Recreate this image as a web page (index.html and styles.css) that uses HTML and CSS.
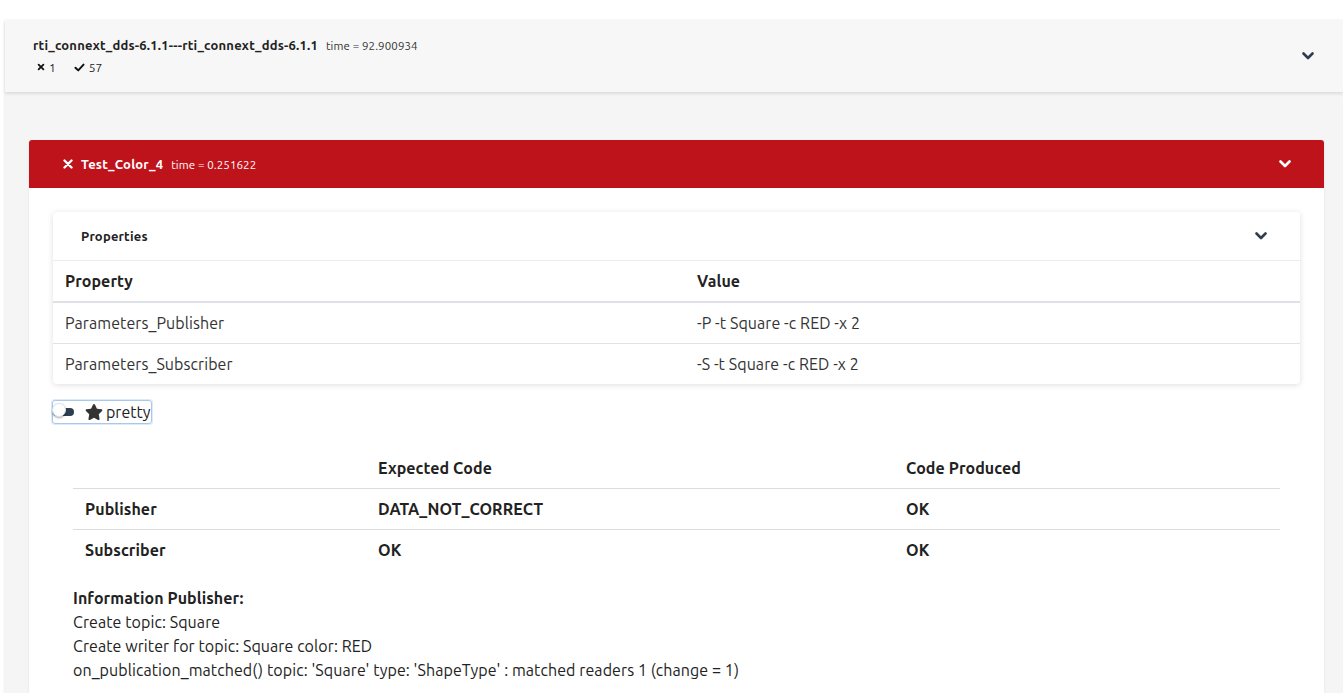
FILE: index.html
```html
<!DOCTYPE html>
<html>
<head>
<meta charset="utf-8">
<link rel="stylesheet" href="styles.css">
</head>
<body>
<div class="suite">
  <div class="suite-head">
    <div class="suite-info">
      <div class="title-line"><span class="title">rti_connext_dds-6.1.1---rti_connext_dds-6.1.1</span><span class="time">time = 92.900934</span></div>
      <div class="counts">
        <span class="count"><svg class="ic-x" viewBox="0 0 10 10"><path d="M2 2L8 8M8 2L2 8" stroke="#111" stroke-width="2.2" stroke-linecap="round"/></svg>1</span>
        <span class="count"><svg class="ic-check" viewBox="0 0 12 10"><path d="M1.5 5.2L4.6 8.2L10.5 1.8" fill="none" stroke="#111" stroke-width="2.2" stroke-linecap="round" stroke-linejoin="round"/></svg>57</span>
      </div>
    </div>
    <svg class="chev" viewBox="0 0 12 8"><path d="M1.5 1.5L6 6L10.5 1.5" fill="none" stroke="#2c3e50" stroke-width="2.6" stroke-linecap="round" stroke-linejoin="round"/></svg>
  </div>
  <div class="suite-body">
    <div class="case">
      <div class="case-head">
        <div class="case-title">
          <svg class="ic-fail" viewBox="0 0 10 10"><path d="M1.5 1.5L8.5 8.5M8.5 1.5L1.5 8.5" stroke="#fff" stroke-width="2.4" stroke-linecap="round"/></svg>
          <span class="title">Test_Color_4</span><span class="time">time = 0.251622</span>
        </div>
        <svg class="chev" viewBox="0 0 12 8"><path d="M1.5 1.5L6 6L10.5 1.5" fill="none" stroke="#fff" stroke-width="2.6" stroke-linecap="round" stroke-linejoin="round"/></svg>
      </div>
      <div class="case-body">
        <div class="props">
          <div class="props-head">
            <span class="props-title">Properties</span>
            <svg class="chev" viewBox="0 0 12 8"><path d="M1.5 1.5L6 6L10.5 1.5" fill="none" stroke="#2c3e50" stroke-width="2.6" stroke-linecap="round" stroke-linejoin="round"/></svg>
          </div>
          <table class="ptable">
            <thead><tr><th class="c1">Property</th><th>Value</th></tr></thead>
            <tbody>
              <tr><td>Parameters_Publisher</td><td>-P -t Square -c RED -x 2</td></tr>
              <tr><td>Parameters_Subscriber</td><td>-S -t Square -c RED -x 2</td></tr>
            </tbody>
          </table>
        </div>
        <div class="toggle-row">
          <label class="toggle">
            <span class="switch"><span class="knob"></span></span>
            <svg class="star" viewBox="0 0 576 512"><path fill="#333" d="M259.3 17.8L194 150.2 47.9 171.5c-26.2 3.8-36.700 36.1-17.7 54.6l105.7 103-25 145.5c-4.5 26.3 23.2 46 46.4 33.7L288 439.6l130.7 68.7c23.2 12.2 50.9-7.4 46.4-33.7l-25-145.5 105.7-103c19-18.5 8.5-50.8-17.7-54.6L382 150.2 316.7 17.8c-11.7-23.6-45.6-23.9-57.4 0z"/></svg>
            <span class="toggle-text">pretty</span>
          </label>
        </div>
        <table class="rtable">
          <thead><tr><th class="r1"></th><th class="r2">Expected Code</th><th>Code Produced</th></tr></thead>
          <tbody>
            <tr><td>Publisher</td><td>DATA_NOT_CORRECT</td><td>OK</td></tr>
            <tr><td>Subscriber</td><td>OK</td><td>OK</td></tr>
          </tbody>
        </table>
        <div class="info">
          <div class="info-title">Information Publisher:</div>
          <div>Create topic: Square</div>
          <div>Create writer for topic: Square color: RED</div>
          <div>on_publication_matched() topic: 'Square' type: 'ShapeType' : matched readers 1 (change = 1)</div>
        </div>
      </div>
    </div>
  </div>
</div>
</body>
</html>
```

FILE: styles.css
```css
html, body {
  margin: 0;
  padding: 0;
  background: #ffffff;
  font-family: "Ubuntu", "Lato", "Noto Sans", sans-serif;
  color: #333333;
  overflow: hidden;
}

.suite {
  margin: 20px 0 0 5px;
  background: #f5f5f5;
  min-height: 700px;
  box-shadow: 0 1px 3px rgba(0,0,0,0.12);
}

.suite-head {
  height: 72px;
  box-sizing: border-box;
  display: flex;
  align-items: center;
  justify-content: space-between;
  padding: 0 29px 0 28px;
  background: #f7f7f7;
  box-shadow: 0 2px 3px rgba(0,0,0,0.10);
  position: relative;
}

.suite-info {
  display: flex;
  flex-direction: column;
  gap: 9px;
  margin-top: -1px;
}

.title-line {
  display: flex;
  align-items: baseline;
}

.title {
  font-weight: 700;
  font-size: 13px;
  letter-spacing: 0.22px;
  color: #222;
}

.time {
  font-size: 11.5px;
  letter-spacing: 0.1px;
  margin-left: 8px;
  color: #333;
}

.counts {
  display: flex;
  gap: 18px;
  font-size: 12px;
  color: #222;
  padding-left: 4px;
}

.count {
  display: inline-flex;
  align-items: center;
  gap: 4px;
}

.ic-x { width: 8px; height: 8px; }
.ic-check { width: 11px; height: 9px; }

.chev {
  width: 12px;
  height: 8px;
}

.suite-body {
  padding: 48px 19px 0 24px;
}

.case {
  background: #ffffff;
  box-shadow: 0 1px 3px rgba(0,0,0,0.08);
  border-radius: 3px 3px 0 0;
}

.case-head {
  height: 48px;
  background: #bf131c;
  border-radius: 3px 3px 0 0;
  display: flex;
  align-items: center;
  justify-content: space-between;
  padding: 0 33px 0 34px;
  color: #fff;
}

.case-title {
  display: flex;
  align-items: center;
}

.case-title .title { color: #fff; margin-left: 8px; }
.case-title .time { color: #fff; }

.ic-fail { width: 10px; height: 10px; }

.case-body {
  padding: 24px 24px 30px;
}

.props {
  background: #fff;
  border-radius: 4px;
  box-shadow: 0 1px 6px rgba(0,0,0,0.13);
  overflow: hidden;
}

.props-head {
  height: 48px;
  display: flex;
  align-items: center;
  justify-content: space-between;
  padding: 0 33px 0 28px;
  border-bottom: 1px solid #ececec;
}

.props-title {
  font-weight: 700;
  font-size: 13px;
  letter-spacing: 0.2px;
  color: #222;
}

table {
  border-collapse: collapse;
  width: 100%;
  font-size: 16px;
  letter-spacing: 0.08px;
}

.ptable th, .ptable td {
  text-align: left;
  padding: 0 12px;
  height: 40px;
}

.ptable th {
  font-weight: 700;
  border-bottom: 2px solid #dee2e6;
  color: #222;
}

.ptable th.c1 { width: 608px; }

.ptable td { border-top: 1px solid #e2e2e2; color: #333; }
.ptable tbody tr:first-child td { border-top: none; }

.toggle-row {
  margin-top: 16px;
  display: flex;
}

.toggle {
  display: inline-flex;
  align-items: center;
  border: 1px solid #a8c8ec;
  border-radius: 3px;
  height: 22px;
  padding-right: 0;
  box-shadow: 0 0 0 1px rgba(160,195,235,0.35);
  margin-left: -1px;
}

.switch {
  position: relative;
  width: 21px;
  height: 8px;
  background: #2c3e50;
  border-radius: 5px;
}

.knob {
  position: absolute;
  left: -1px;
  top: -5px;
  width: 14px;
  height: 14px;
  background: #fff;
  border-radius: 50%;
  box-shadow: 0 1px 2px rgba(0,0,0,0.35);
  border: 1px solid #dfe6ee;
  box-sizing: border-box;
}

.star {
  width: 18px;
  height: 16px;
  margin-left: 11px;
}

.toggle-text {
  font-size: 16px;
  margin-left: 3px;
  color: #222;
}

.rtable {
  margin: 24px 20px 0 20px;
  width: calc(100% - 40px);
}

.rtable th, .rtable td {
  text-align: left;
  padding: 0 12px;
  height: 40px;
  font-weight: 700;
  color: #222;
}

.rtable th.r1 { width: 269px; }
.rtable th.r2 { width: 504px; }

.rtable td { border-top: 1px solid #dcdcdc; }

.info {
  margin: 16px 20px 0 20px;
  font-size: 16px;
  line-height: 24px;
  letter-spacing: 0.08px;
  color: #222;
}

.info-title { font-weight: 700; }
```
